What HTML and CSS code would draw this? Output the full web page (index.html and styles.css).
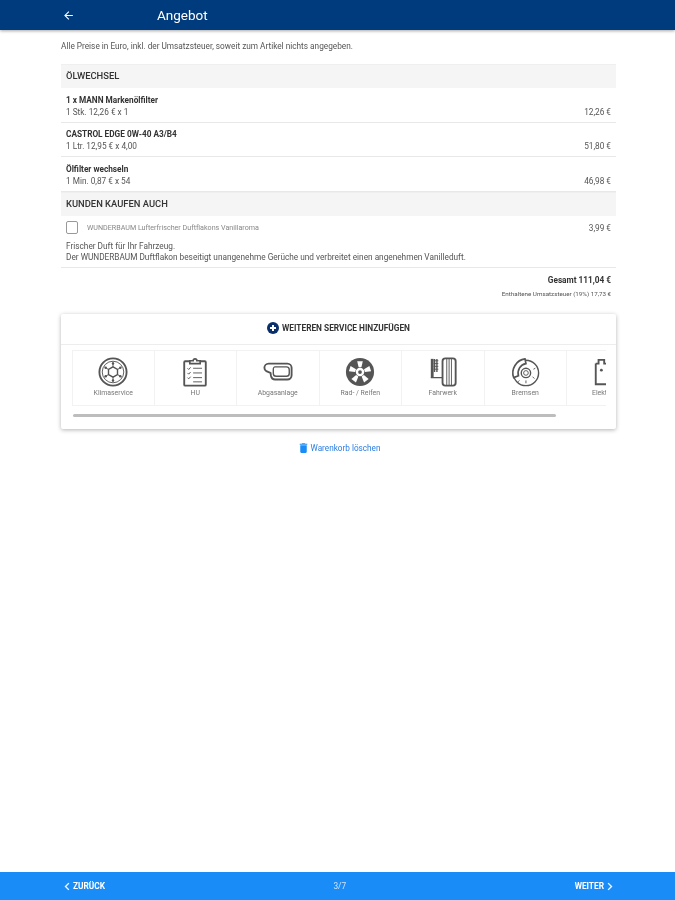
FILE: index.html
```html
<!DOCTYPE html>
<html lang="de">
<head>
    <meta charset="UTF-8">
    <meta name="viewport" content="width=device-width, initial-scale=1.0">
    <title>Angebot</title>
    <link rel="stylesheet" href="styles.css">
</head>
<body>
    <header class="topbar">
        <svg class="back_icon" viewBox="0 0 24 24"><path d="M20 11H7.800l5.600-5.600L12 4l-8 8 8 8 1.400-1.400L7.800 13H20z"/></svg>
        <h1>Angebot</h1>
    </header>

    <main class="content">
        <p class="intro">Alle Preise in Euro, inkl. der Umsatzsteuer, soweit zum Artikel nichts angegeben.</p>

        <h2 class="section_title">ÖLWECHSEL</h2>
        <div class="item">
            <div>
                <div class="item_name">1 x MANN Markenölfilter</div>
                <div class="item_detail">1 Stk. 12,26 € x 1</div>
            </div>
            <div class="price">12,26 €</div>
        </div>
        <div class="item">
            <div>
                <div class="item_name">CASTROL EDGE 0W-40 A3/B4</div>
                <div class="item_detail">1 Ltr. 12,95 € x 4,00</div>
            </div>
            <div class="price">51,80 €</div>
        </div>
        <div class="item">
            <div>
                <div class="item_name">Ölfilter wechseln</div>
                <div class="item_detail">1 Min. 0,87 € x 54</div>
            </div>
            <div class="price">46,98 €</div>
        </div>

        <h2 class="section_title">KUNDEN KAUFEN AUCH</h2>
        <div class="upsell">
            <div class="upsell_head">
                <span class="checkbox"></span>
                <span class="upsell_name">WUNDERBAUM Lufterfrischer Duftflakons Vanillaroma</span>
                <span class="upsell_price">3,99 €</span>
            </div>
            <p class="upsell_text">Frischer Duft für Ihr Fahrzeug.<br>Der WUNDERBAUM Duftflakon beseitigt unangenehme Gerüche und verbreitet einen angenehmen Vanilleduft.</p>
        </div>

        <div class="totals">
            <div class="total">Gesamt 111,04 €</div>
            <div class="tax">Enthaltene Umsatzsteuer (19%) 17,73 €</div>
        </div>

        <section class="service_card">
            <div class="service_head">
                <svg class="plus_icon" viewBox="0 0 24 24"><circle cx="12" cy="12" r="12"/><path class="plus_mark" d="M10 6h4v4h4v4h-4v4h-4v-4H6v-4h4z"/></svg>
                <span>WEITEREN SERVICE HINZUFÜGEN</span>
            </div>
            <div class="service_list">
                <div class="service">
                    <svg viewBox="0 0 32 32"><circle class="heavy" cx="16" cy="16" r="14.500"/><circle class="thin" cx="16" cy="16" r="11.500"/><path class="line" d="M16 10.500l4.800 2.750v5.500L16 21.500l-4.800-2.750v-5.500z"/><path class="thin" d="M16 5.500v5M16 21.500v5M6.900 10.750l4.300 2.500M20.800 18.750l4.300 2.500M6.900 21.250l4.300-2.500M20.800 13.250l4.300-2.500"/><circle class="dot" cx="16" cy="7" r="1.300"/><circle class="dot" cx="16" cy="25" r="1.300"/><circle class="dot" cx="8.200" cy="11.500" r="1.300"/><circle class="dot" cx="23.800" cy="11.500" r="1.300"/><circle class="dot" cx="8.200" cy="20.500" r="1.300"/><circle class="dot" cx="23.800" cy="20.500" r="1.300"/></svg>
                    <span>Klimaservice</span>
                </div>
                <div class="service">
                    <svg viewBox="0 0 32 32"><rect class="heavy" x="4.500" y="4.500" width="23" height="26" rx="1"/><path class="cover" d="M10.500 7V4h3.500a2 2 0 0 1 4 0h3.500v3z"/><path class="thin" d="M14 12h9.500M14 17h9.500M14 22h9.500M14 26.500h9.500M8 12l1.300 1.300 2-2.300M8 17l1.300 1.300 2-2.300M8 22l1.300 1.300 2-2.300"/></svg>
                    <span>HU</span>
                </div>
                <div class="service">
                    <svg viewBox="0 0 32 32"><path class="heavy" d="M9 7h17c2.500 0 4.500 2 4.500 4.500v8c0 2.500-2 4.500-4.500 4.500H13c-2.500 0-4-1.500-4.500-4L8 17l-4.500-2C2 14.300 1.500 13 1.500 11.500 1.500 9 3.500 7 6 7z"/><path class="line" d="M13 10.500h12c2 0 3 1 3 3v4c0 2-1 3-3 3H14c-2 0-3-1-3-3v-4c0-2 0-3 2-3z"/></svg>
                    <span>Abgasanlage</span>
                </div>
                <div class="service">
                    <svg viewBox="0 0 32 32"><circle class="dot" cx="16" cy="16" r="15"/><circle class="hole" cx="16" cy="16" r="4.500"/><circle class="dot" cx="16" cy="16" r="2"/><g class="hole"><path id="spoke" d="M13 4.500h6l-1.500 6.500h-3z"/><path transform="rotate(72 16 16)" d="M13 4.500h6l-1.500 6.500h-3z"/><path transform="rotate(144 16 16)" d="M13 4.500h6l-1.500 6.500h-3z"/><path transform="rotate(216 16 16)" d="M13 4.500h6l-1.500 6.500h-3z"/><path transform="rotate(288 16 16)" d="M13 4.500h6l-1.500 6.500h-3z"/></g></svg>
                    <span>Rad- / Reifen</span>
                </div>
                <div class="service">
                    <svg viewBox="0 0 32 32"><rect class="heavy" x="15.500" y="1.500" width="14" height="29" rx="3"/><path class="thin" d="M20 2v28M22.500 2v28M25 2v28"/><rect class="dot" x="3" y="2" width="3" height="20"/><path class="line" d="M7 2v14M9.500 2v14M3 22h12.500"/><path class="thin" d="M6 4h5M6 7h5M6 10h5M6 13h5"/></svg>
                    <span>Fahrwerk</span>
                </div>
                <div class="service">
                    <svg viewBox="0 0 32 32"><circle class="line" cx="17" cy="17" r="13.500"/><circle class="line" cx="17" cy="17" r="5"/><circle class="thin" cx="17" cy="17" r="2.500"/><path class="cover" d="M4 22C.5 13 7 3 16 2l1 5C11 8 7.500 14 9 20z"/><path class="thin" d="M17 25v3M24 21l2 2M25 13l2-1M10 25l-1.500 1.500"/></svg>
                    <span>Bremsen</span>
                </div>
                <div class="service service_cut">
                    <svg viewBox="0 0 32 32"><path class="heavy" d="M4 7h3V3h6v4h4M4 7v22h14"/><circle class="dot" cx="10" cy="14" r="1.500"/></svg>
                    <span>Elektrik</span>
                </div>
            </div>
            <div class="scrollbar"></div>
        </section>

        <div class="clear_cart">
            <svg viewBox="0 0 24 24"><path d="M6 19c0 1.100.9 2 2 2h8c1.100 0 2-.9 2-2V7H6zM19 4h-3.500l-1-1h-5l-1 1H5v2h14z"/></svg>
            <span>Warenkorb löschen</span>
        </div>
    </main>

    <footer class="bottombar">
        <div class="nav_link">
            <svg viewBox="0 0 8 12"><path d="M6.500 1.500 2 6l4.500 4.500"/></svg>
            <span>ZURÜCK</span>
        </div>
        <div class="steps">3/7</div>
        <div class="nav_link">
            <span>WEITER</span>
            <svg viewBox="0 0 8 12"><path d="M1.500 1.500 6 6l-4.500 4.500"/></svg>
        </div>
    </footer>
</body>
</html>
```
FILE: styles.css
```css
html, body {
    height: 100%;
}
body {
    display: flex;
    flex-direction: column;
    margin: 0;
    font-family: Roboto, "Liberation Sans", sans-serif;
    background: #fff;
    color: #555;
    overflow: hidden;
    filter: blur(0.4px);
}
.topbar {
    display: flex;
    align-items: center;
    flex: 0 0 30px;
    padding-left: 62px;
    background: #003c7d;
    box-shadow: 0 1px 3px rgba(0, 0, 0, 0.35);
    color: #fff;
}
.back_icon {
    width: 13px;
    height: 13px;
    fill: #fff;
}
.topbar h1 {
    margin: 0 0 0 82px;
    font-size: 13.500px;
    font-weight: 400;
}
.content {
    flex: 1;
    padding: 0 59px 0 61px;
}
.intro {
    margin: 11px 0 13px;
    font-size: 8.250px;
    line-height: 10px;
}
.section_title {
    height: 24px;
    margin: 0;
    padding-left: 5px;
    background: #f5f5f5;
    border-top: 1px solid #efefef;
    box-sizing: border-box;
    font-size: 9.400px;
    font-weight: 500;
    line-height: 22px;
    color: #333;
}
.item {
    display: flex;
    justify-content: space-between;
    align-items: flex-end;
    height: 34.500px;
    padding: 7px 5px 4px;
    border-bottom: 1px solid #e8e8e8;
    box-sizing: border-box;
    font-size: 8.250px;
    line-height: 12px;
}
.item_name {
    font-weight: 700;
    color: #333;
}
.price {
    line-height: 12px;
}
.upsell {
    height: 52px;
    padding: 0 5px;
    border-bottom: 1px solid #e8e8e8;
    box-sizing: border-box;
}
.upsell_head {
    display: flex;
    align-items: center;
    height: 22px;
    padding-top: 1px;
}
.checkbox {
    width: 10px;
    height: 11px;
    border: 1px solid #999;
    border-radius: 2px;
}
.upsell_name {
    flex: 1;
    margin-left: 9px;
    font-size: 7.150px;
    color: #888;
}
.upsell_price {
    font-size: 8.250px;
}
.upsell_text {
    margin: 2px 0 0;
    font-size: 8.250px;
    line-height: 11px;
}
.totals {
    padding: 7px 5px 0;
    text-align: right;
}
.total {
    font-size: 8.250px;
    font-weight: 700;
    line-height: 11px;
    color: #333;
}
.tax {
    margin-top: 4px;
    font-size: 6.250px;
    line-height: 9px;
}
.service_card {
    height: 115px;
    margin-top: 15px;
    background: #fff;
    border-radius: 2px;
    box-shadow: 0 1px 4px rgba(0, 0, 0, 0.3);
    box-sizing: border-box;
    overflow: hidden;
}
.service_head {
    display: flex;
    justify-content: center;
    align-items: center;
    gap: 3px;
    height: 31px;
    padding-bottom: 2px;
    border-bottom: 1px solid #ededed;
    box-sizing: border-box;
    font-size: 8.300px;
    font-weight: 700;
    color: #333;
}
.plus_icon {
    width: 12px;
    height: 12px;
    fill: #0b2f6b;
}
.plus_mark {
    fill: #fff;
}
.service_list {
    display: flex;
    width: 534px;
    height: 57px;
    margin: 5px 0 0 11px;
    overflow: hidden;
}
.service {
    display: flex;
    flex: 0 0 82.500px;
    flex-direction: column;
    align-items: center;
    height: 56px;
    padding-top: 6px;
    border: 1px solid #f2f2f2;
    border-left-width: 0;
    box-sizing: border-box;
    font-size: 6.900px;
    color: #777;
}
.service:first-child {
    border-left-width: 1px;
}
.service svg {
    width: 30px;
    height: 30px;
    margin-bottom: 2px;
}
.service_cut {
    align-items: flex-start;
    padding-left: 25px;
    border-right: 0;
}
.line, .thin, .heavy {
    fill: none;
    stroke: #555;
}
.line {
    stroke-width: 1.500;
}
.thin {
    stroke-width: 1;
}
.heavy {
    stroke-width: 2;
}
.cover {
    fill: #fff;
    stroke: #555;
    stroke-width: 1.800;
}
.dot {
    fill: #555;
}
.hole {
    fill: #fff;
}
.scrollbar {
    width: 483px;
    height: 3px;
    margin: 7px 0 0 12px;
    background: #bdbdbd;
    border-radius: 2px;
}
.clear_cart {
    display: flex;
    justify-content: center;
    align-items: center;
    gap: 1px;
    margin-top: 12px;
    font-size: 8.200px;
    color: #2a7de1;
}
.clear_cart svg {
    width: 13px;
    height: 14px;
    fill: #1a8cf8;
}
.bottombar {
    display: flex;
    justify-content: space-between;
    align-items: center;
    flex: 0 0 28px;
    padding: 0 62px 0 64px;
    background: #1a8cf8;
    color: #fff;
    font-size: 8.300px;
    font-weight: 700;
}
.nav_link {
    display: flex;
    align-items: center;
    gap: 3px;
}
.nav_link svg {
    width: 6px;
    height: 9px;
    fill: none;
    stroke: #fff;
    stroke-width: 1.800;
}
.steps {
    font-weight: 400;
    color: #cfe5fc;
}
```
